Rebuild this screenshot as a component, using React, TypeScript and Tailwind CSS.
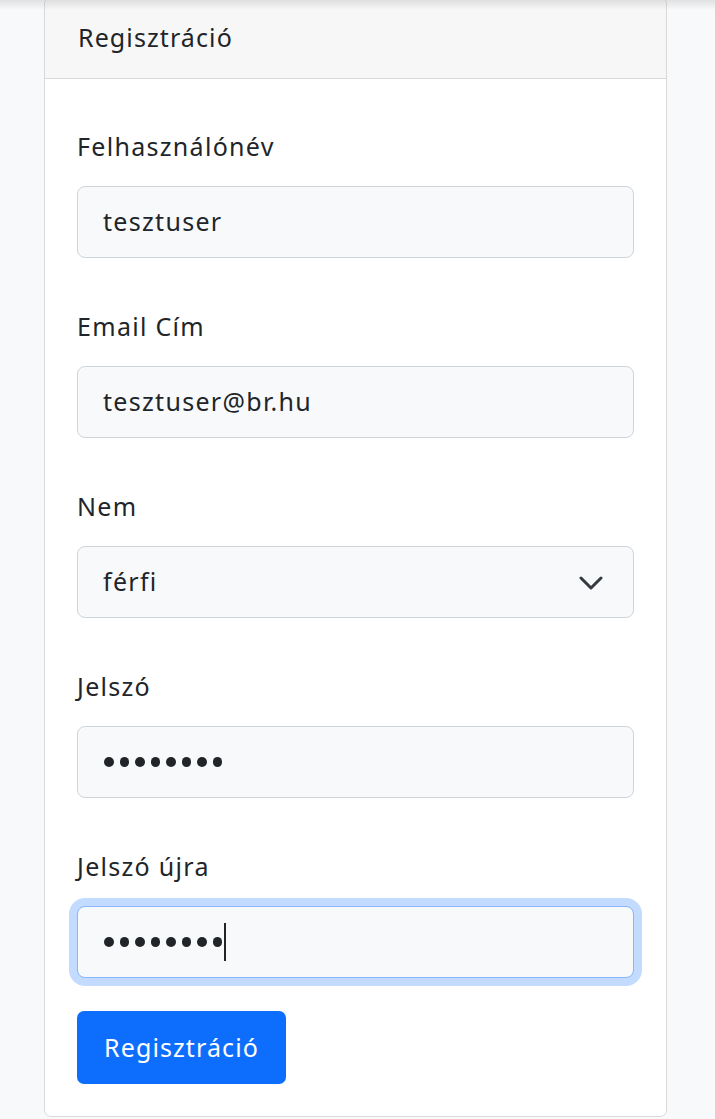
import React from "react";

const font = { fontFamily: "'Noto Sans', 'Open Sans', sans-serif" };

function Label({ children }: { children: React.ReactNode }) {
  return (
    <div className="h-[37px] leading-[37px] text-[25px] tracking-[1.3px] text-[#212529] mb-[21px]">{children}</div>
  );
}

function Box({ children, focused = false }: { children: React.ReactNode; focused?: boolean }) {
  return (
    <div
      className={
        "relative h-[72px] rounded-[8px] bg-[#f8f9fa] border flex items-center pl-[25px] pr-[30px] text-[25px] tracking-[1.3px] text-[#212529] " +
        (focused
          ? "border-[#86b7fe] shadow-[0_0_0_8px_#c2dbfe]"
          : "border-[#ced4da]")
      }
    >
      {children}
    </div>
  );
}

function Dots({ caret = false }: { caret?: boolean }) {
  return (
    <div className="flex items-center gap-[6px] pl-[1px]">
      {Array.from({ length: 8 }).map((_, i) => (
        <span key={i} className="block w-[9.5px] h-[9.5px] rounded-full bg-[#212529]" />
      ))}
      {caret && <span className="block w-[2px] h-[38px] bg-[#212529] -ml-[4px]" />}
    </div>
  );
}

export default function App() {
  return (
    <div className="relative min-h-[1119px] bg-[#f8f9fa] overflow-hidden" style={font}>
      <div className="pl-[44px] pr-[48px]">
        <div className="w-[623px] bg-white border border-[#d9d9d9] rounded-[7px] -mt-[3px]">
          <div className="h-[81px] bg-[#f7f7f7] border-b border-[#d9d9d9] rounded-t-[7px] pl-[33px] pt-[21px] text-[25px] tracking-[1.1px] leading-[37px] text-[#212529]">
            Regisztráció
          </div>
          <div className="pt-[49px] px-[32px] pb-[32px]">
            <div className="mb-[50px]">
              <Label>Felhasználónév</Label>
              <Box>tesztuser</Box>
            </div>
            <div className="mb-[50px]">
              <Label>Email Cím</Label>
              <Box>tesztuser@br.hu</Box>
            </div>
            <div className="mb-[50px]">
              <Label>Nem</Label>
              <Box>
                <span className="flex-1">férfi</span>
                <svg width="24" height="14" viewBox="0 0 24 14" className="absolute right-[30px] top-[29px]">
                  <polyline points="2,2 12,12 22,2" fill="none" stroke="#343a40" strokeWidth="3" strokeLinecap="round" strokeLinejoin="round" />
                </svg>
              </Box>
            </div>
            <div className="mb-[50px]">
              <Label>Jelszó</Label>
              <Box>
                <Dots />
              </Box>
            </div>
            <div className="mb-[33px]">
              <Label>Jelszó újra</Label>
              <Box focused>
                <Dots caret />
              </Box>
            </div>
            <button className="h-[73px] w-[209px] rounded-[7px] bg-[#0d6efd] text-white text-[25px] tracking-[1.1px] leading-[37px]">
              Regisztráció
            </button>
          </div>
        </div>
      </div>
      <div className="absolute left-0 right-0 top-0 h-[10px] bg-gradient-to-b from-black/10 to-transparent pointer-events-none" />
    </div>
  );
}
